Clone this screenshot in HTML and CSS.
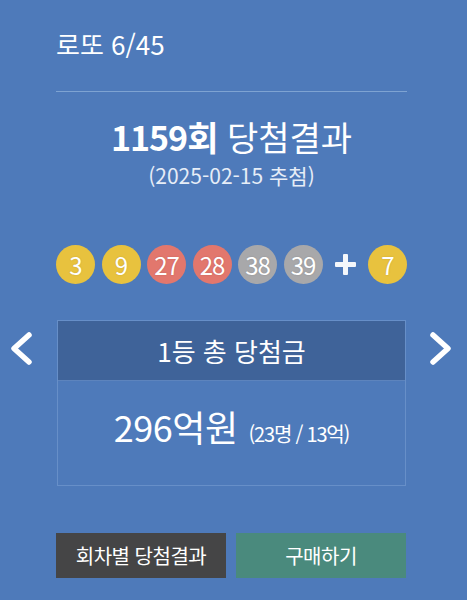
FILE: index.html
```html
<!DOCTYPE html>
<html lang="ko">
<head>
  <meta charset="UTF-8">
  <title>로또 6/45 당첨결과</title>
  <meta name="viewport" content="width=device-width, initial-scale=1.0">
  <link rel="stylesheet" href="styles.css">
</head>
<body>
  <div class="head">
    <div class="brand">로또 6/45</div>
  </div>

  <div class="draw">
    <h1 class="draw-title"><strong>1159회</strong> 당첨결과</h1>
    <p class="draw-date">(2025-02-15 추첨)</p>
  </div>

  <div class="balls">
    <span class="ball yellow">3</span>
    <span class="ball yellow">9</span>
    <span class="ball red">27</span>
    <span class="ball red">28</span>
    <span class="ball gray">38</span>
    <span class="ball gray">39</span>
    <span class="plus"></span>
    <span class="ball yellow">7</span>
  </div>

  <div class="slider">
    <button class="nav prev" aria-label="이전 회차">
      <svg width="26" height="38" viewBox="0 0 26 38"><path d="M21 5 L6 18.5 L21 32"/></svg>
    </button>
    <div class="prize">
      <div class="prize-head">1등 총 당첨금</div>
      <div class="prize-body">
        <span class="amount">296억원</span>
        <span class="detail">(23명 / 13억)</span>
      </div>
    </div>
    <button class="nav next" aria-label="다음 회차">
      <svg width="26" height="38" viewBox="0 0 26 38"><path d="M5 5 L20 18.5 L5 32"/></svg>
    </button>
  </div>

  <div class="actions">
    <a class="btn dark" href="#">회차별 당첨결과</a>
    <a class="btn green" href="#">구매하기</a>
  </div>
</body>
</html>
```

FILE: styles.css
```css
* {
  box-sizing: border-box;
}

body {
  margin: 0;
  background: #4e7aba;
  color: #fff;
  font-family: "Noto Sans CJK KR", "Noto Sans", sans-serif;
  width: 467px;
  height: 600px;
  overflow: hidden;
}

.head {
  padding: 0 60px 0 56px;
}

.brand {
  font-size: 26px;
  line-height: 32px;
  padding: 28px 0 31px;
  border-bottom: 1px solid #7ea3d2;
}

.draw {
  text-align: center;
  padding: 25px 0 0;
  margin-left: -4px;
}

.draw-title {
  margin: 0;
  font-size: 34px;
  line-height: 40px;
  font-weight: 400;
}

.draw-title strong {
  font-weight: 700;
  letter-spacing: -1px;
}

.draw-date {
  margin: 5px 0 0;
  font-size: 21px;
  line-height: 26px;
  color: #e6edf7;
}

.balls {
  display: flex;
  align-items: center;
  gap: 6.5px;
  margin: 57px 0 0 56px;
  height: 39px;
}

.ball {
  width: 39px;
  height: 39px;
  border-radius: 50%;
  display: flex;
  align-items: center;
  justify-content: center;
  font-size: 24px;
  letter-spacing: -1px;
  text-shadow: 0 0 2px rgba(0,0,0,0.15);
}

.ball.yellow { background: #e8c23e; }
.ball.red { background: #e2776d; }
.ball.gray { background: #a8a8aa; }

.plus {
  position: relative;
  width: 21px;
  height: 21px;
  margin: 0 6px 0 5.5px;
}

.plus::before,
.plus::after {
  content: "";
  position: absolute;
  background: #f4f7fb;
  border-radius: 1px;
}

.plus::before {
  left: 0;
  right: 0;
  top: 8px;
  height: 5px;
}

.plus::after {
  top: 0;
  bottom: 0;
  left: 8px;
  width: 5px;
}

.slider {
  display: flex;
  align-items: flex-start;
  margin-top: 36px;
}

.nav {
  border: none;
  background: none;
  padding: 10px 0 0;
  margin: 0;
  cursor: pointer;
}

.nav svg {
  display: block;
  fill: none;
  stroke: #fff;
  stroke-width: 5.5;
  stroke-linecap: round;
  stroke-linejoin: round;
}

.prev {
  width: 57px;
  padding-left: 8px;
}

.next {
  width: 61px;
  padding-left: 22px;
}

.prize {
  width: 349px;
  border: 1px solid #678fc8;
}

.prize-head {
  background: #3f6399;
  height: 60px;
  display: flex;
  align-items: center;
  justify-content: center;
  font-size: 26px;
  border-bottom: 1px solid #5d84bd;
}

.prize-body {
  height: 104px;
  display: flex;
  align-items: baseline;
  justify-content: center;
  padding-top: 22px;
  gap: 11px;
}

.amount {
  font-size: 36px;
  line-height: 46px;
  letter-spacing: -0.5px;
}

.detail {
  font-size: 20px;
  letter-spacing: -1.2px;
}

.actions {
  display: flex;
  gap: 10px;
  margin: 47px 0 0 56px;
}

.btn {
  width: 170px;
  height: 45px;
  display: flex;
  align-items: center;
  justify-content: center;
  color: #fff;
  text-decoration: none;
  font-size: 20px;
  letter-spacing: -0.5px;
}

.btn.dark { background: #454546; }
.btn.green { background: #4a8a7d; }
```
